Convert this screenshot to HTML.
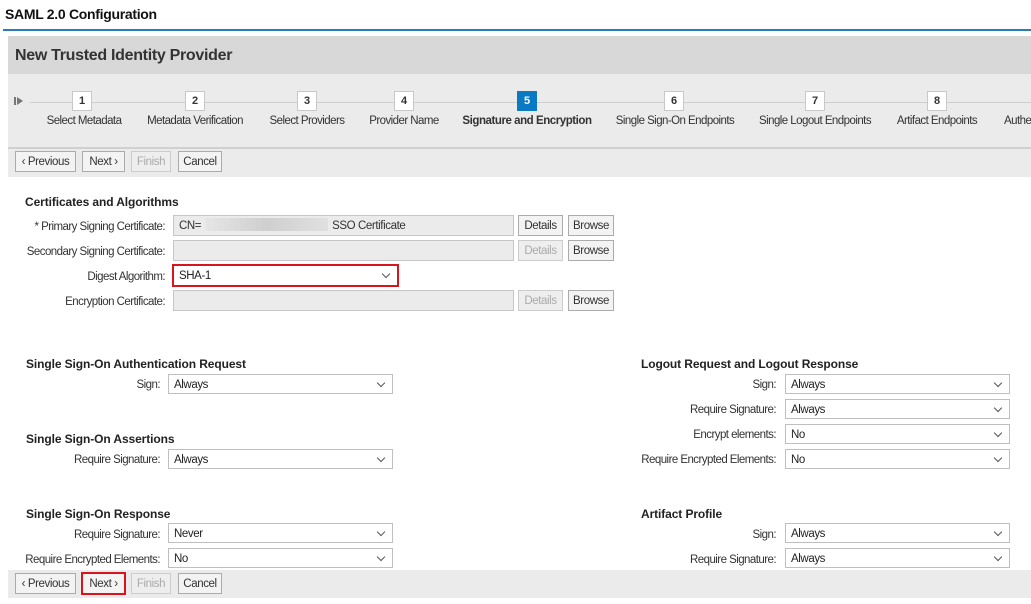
<!DOCTYPE html><html><head><meta charset="utf-8"><style>
*{box-sizing:border-box;margin:0;padding:0}
body{width:1031px;height:604px;overflow:hidden;background:#fff;font-family:"Liberation Sans",Arial,sans-serif;color:#333;position:relative}
.a{position:absolute;white-space:nowrap}
.h{font-size:12px;font-weight:bold;color:#222;letter-spacing:-.1px}
.lbl{text-align:right;width:200px;font-size:11.5px;letter-spacing:-.55px;color:#333;line-height:14px;padding-top:1px}
.sel{position:absolute;height:20px;border:1px solid #bfbfbf;background:#fff;font-size:11.5px;letter-spacing:-.4px;padding:1px 0 0 5px;line-height:18px;color:#222}
.sel:after{content:"";position:absolute;right:8px;top:5px;width:5px;height:5px;border-right:1.5px solid #555;border-bottom:1.5px solid #555;transform:rotate(45deg)}
.inp{position:absolute;height:21px;border:1px solid #c6c6c6;background:#ebebeb;font-size:11.5px;letter-spacing:-.4px;padding:1px 0 0 5px;line-height:19px;color:#333}
.btn{position:absolute;height:21px;border:1px solid #ababab;background:#f3f3f3;font-size:11.5px;letter-spacing:-.4px;text-align:center;line-height:19px;padding-top:1px;color:#333}
.dis{color:#aaa;border-color:#ccc;background:#eee}
.box{position:absolute;width:20px;height:20px;background:#fff;border:1px solid #c8c8c8;font-size:11px;font-weight:bold;text-align:center;line-height:18px;color:#333;top:91px}
.sl{position:absolute;top:114px;line-height:14px;font-size:11.5px;letter-spacing:-.55px;color:#333;transform:translateX(-50%);white-space:nowrap}
</style></head><body>
<div class="a" style="left:5px;top:6px;font-size:14px;font-weight:bold;color:#111;letter-spacing:-.3px">SAML 2.0 Configuration</div>
<div class="a" style="left:3px;top:29px;width:1028px;height:2px;background:#2b7bb9"></div>
<div class="a" style="left:8px;top:36px;width:1023px;height:38px;background:#d8d8d8"></div>
<div class="a" style="left:15px;top:47px;font-size:16px;font-weight:bold;color:#333;letter-spacing:-.3px">New Trusted Identity Provider</div>
<div class="a" style="left:8px;top:74px;width:1023px;height:73px;background:#ebebeb"></div>
<div class="a" style="left:30px;top:102px;width:1001px;height:1px;background:#cdcdcd"></div>
<div class="a" style="left:14px;top:97px;width:2px;height:8px;background:#777"></div>
<div class="a" style="left:17px;top:97px;width:0;height:0;border-top:4px solid transparent;border-bottom:4px solid transparent;border-left:6px solid #777"></div>
<div class="box" style="left:72px">1</div>
<div class="box" style="left:185px">2</div>
<div class="box" style="left:297px">3</div>
<div class="box" style="left:394px">4</div>
<div class="box" style="left:517px;background:#0a7ac4;border-color:#0a7ac4;color:#fff">5</div>
<div class="box" style="left:664px">6</div>
<div class="box" style="left:805px">7</div>
<div class="box" style="left:927px">8</div>
<div class="sl" style="left:84px">Select Metadata</div>
<div class="sl" style="left:195px">Metadata Verification</div>
<div class="sl" style="left:307px">Select Providers</div>
<div class="sl" style="left:404px">Provider Name</div>
<div class="sl" style="left:527px;font-weight:bold;letter-spacing:-.45px">Signature and Encryption</div>
<div class="sl" style="left:675px">Single Sign-On Endpoints</div>
<div class="sl" style="left:815px">Single Logout Endpoints</div>
<div class="sl" style="left:937px">Artifact Endpoints</div>
<div class="sl" style="left:1004px;transform:none">Authentication</div>
<div class="a" style="left:8px;top:147px;width:1023px;height:2px;background:#d0d0d0"></div>
<div class="a" style="left:8px;top:149px;width:1023px;height:28px;background:#ebebeb"></div>
<div class="btn" style="left:15px;top:151px;width:61px">&#8249; Previous</div>
<div class="btn" style="left:82px;top:151px;width:43px">Next &#8250;</div>
<div class="btn dis" style="left:131px;top:151px;width:40px">Finish</div>
<div class="btn" style="left:178px;top:151px;width:44px">Cancel</div>

<div class="a h" style="left:25px;top:195px">Certificates and Algorithms</div>
<div class="a lbl" style="left:-35px;top:219px">* Primary Signing Certificate:</div>
<div class="a lbl" style="left:-35px;top:244px">Secondary Signing Certificate:</div>
<div class="a lbl" style="left:-35px;top:269px">Digest Algorithm:</div>
<div class="a lbl" style="left:-35px;top:294px">Encryption Certificate:</div>
<div class="inp" style="left:173px;top:215px;width:341px">CN=<span style="display:inline-block;width:123px;height:13px;background:linear-gradient(90deg,#e6e6e6,#cfcfcf 50%,#e0e0e0);vertical-align:-2px;margin:0 4px"></span>SSO Certificate</div>
<div class="inp" style="left:173px;top:240px;width:341px"></div>
<div class="inp" style="left:173px;top:290px;width:341px"></div>
<div class="btn" style="left:518px;top:215px;width:45px">Details</div>
<div class="btn" style="left:568px;top:215px;width:46px">Browse</div>
<div class="btn dis" style="left:518px;top:240px;width:45px">Details</div>
<div class="btn" style="left:568px;top:240px;width:46px">Browse</div>
<div class="btn dis" style="left:518px;top:290px;width:45px">Details</div>
<div class="btn" style="left:568px;top:290px;width:46px">Browse</div>
<div class="sel" style="left:172px;top:264px;width:227px;height:23px;border:2px solid #d9141c;line-height:19px">SHA-1</div>

<div class="a h" style="left:26px;top:357px">Single Sign-On Authentication Request</div>
<div class="a lbl" style="left:-40px;top:377px">Sign:</div>
<div class="sel" style="left:168px;top:374px;width:225px">Always</div>
<div class="a h" style="left:26px;top:432px">Single Sign-On Assertions</div>
<div class="a lbl" style="left:-40px;top:452px">Require Signature:</div>
<div class="sel" style="left:168px;top:449px;width:225px">Always</div>
<div class="a h" style="left:26px;top:507px">Single Sign-On Response</div>
<div class="a lbl" style="left:-40px;top:527px">Require Signature:</div>
<div class="sel" style="left:168px;top:523px;width:225px">Never</div>
<div class="a lbl" style="left:-40px;top:552px">Require Encrypted Elements:</div>
<div class="sel" style="left:168px;top:548px;width:225px">No</div>

<div class="a h" style="left:641px;top:357px">Logout Request and Logout Response</div>
<div class="a lbl" style="left:576px;top:377px">Sign:</div>
<div class="sel" style="left:785px;top:374px;width:225px">Always</div>
<div class="a lbl" style="left:576px;top:402px">Require Signature:</div>
<div class="sel" style="left:785px;top:399px;width:225px">Always</div>
<div class="a lbl" style="left:576px;top:427px">Encrypt elements:</div>
<div class="sel" style="left:785px;top:424px;width:225px">No</div>
<div class="a lbl" style="left:576px;top:452px">Require Encrypted Elements:</div>
<div class="sel" style="left:785px;top:449px;width:225px">No</div>
<div class="a h" style="left:641px;top:507px">Artifact Profile</div>
<div class="a lbl" style="left:576px;top:527px">Sign:</div>
<div class="sel" style="left:785px;top:523px;width:225px">Always</div>
<div class="a lbl" style="left:576px;top:552px">Require Signature:</div>
<div class="sel" style="left:785px;top:548px;width:225px">Always</div>

<div class="a" style="left:8px;top:570px;width:1023px;height:28px;background:#ebebeb"></div>
<div class="btn" style="left:15px;top:573px;width:61px">&#8249; Previous</div>
<div class="btn" style="left:81px;top:572px;width:45px;height:23px;border:2px solid #d9141c">Next &#8250;</div>
<div class="btn dis" style="left:131px;top:573px;width:40px">Finish</div>
<div class="btn" style="left:178px;top:573px;width:44px">Cancel</div>
</body></html>
